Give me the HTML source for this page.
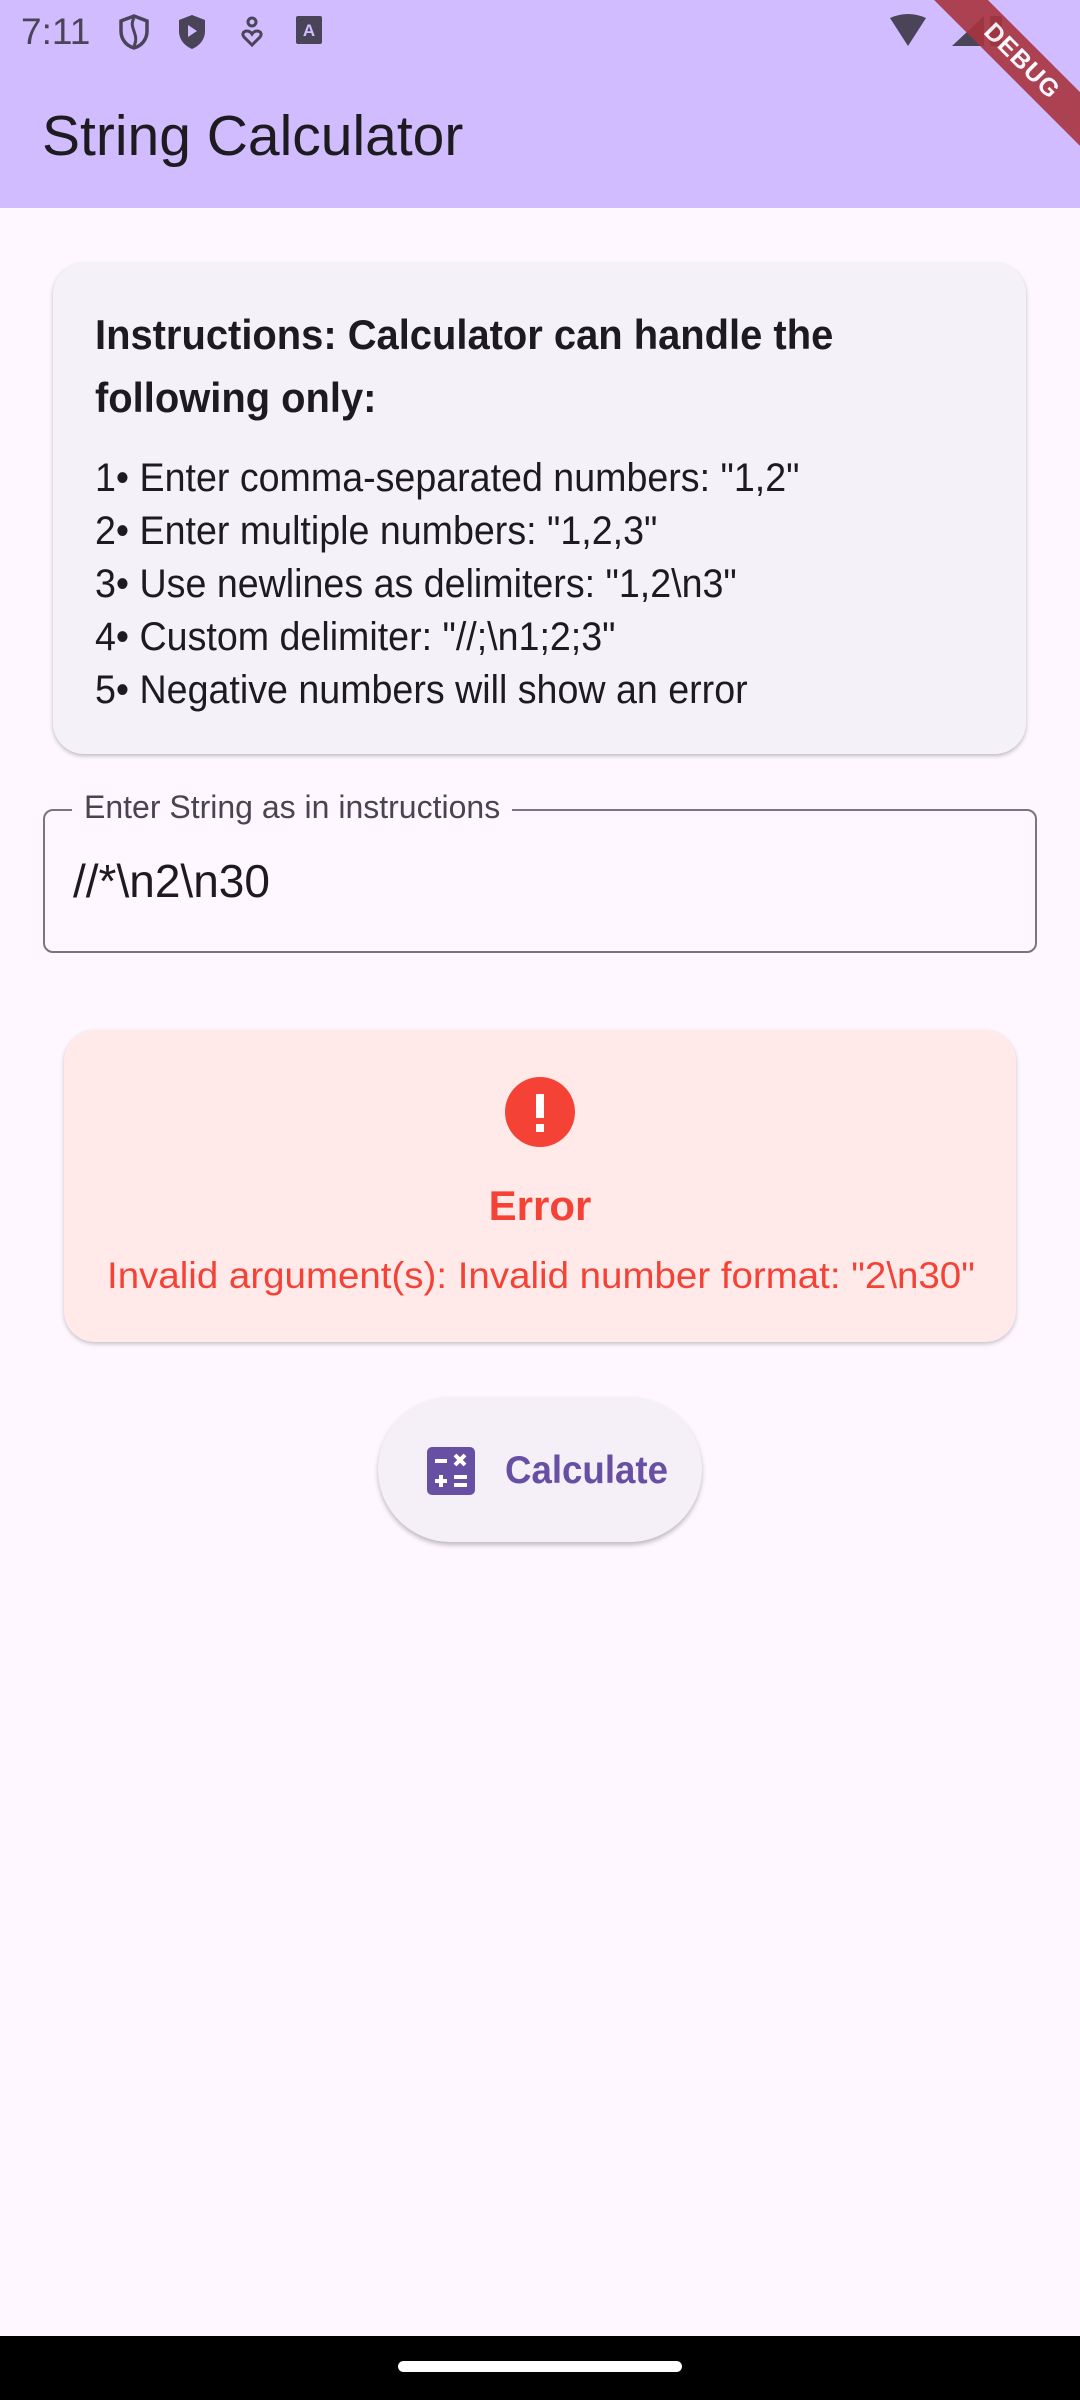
<!DOCTYPE html>
<html><head><meta charset="utf-8"><style>
*{margin:0;padding:0;box-sizing:border-box}
body{width:1080px;height:2400px;background:#fef7ff;font-family:"Liberation Sans",sans-serif;position:relative;overflow:hidden;color:#1d1b20}
.abs{position:absolute}
.sx{display:inline-block;transform-origin:left center;transform:scaleX(0.94);white-space:nowrap}
.appbar{left:0;top:0;width:1080px;height:208px;background:#d0bcff}
.card{left:53px;top:263px;width:973px;height:491px;background:#f5f1f8;border-radius:31px;box-shadow:0 2px 4px rgba(0,0,0,.25)}
.li{left:95px;font-size:40px;color:#1d1b20}
.field{left:43px;top:809px;width:994px;height:144px;border:2px solid #79747e;border-radius:10px}
.err{left:64px;top:1030px;width:952px;height:312px;background:#ffe9e9;border-radius:31px;box-shadow:0 2px 4px rgba(0,0,0,.22)}
.btn{left:378px;top:1397px;width:324px;height:145px;background:#f5eff7;border-radius:73px;box-shadow:0 3px 5px rgba(0,0,0,.25)}
</style></head><body>
<div class="abs appbar"></div>
<div class="abs" style="left:21px;top:11px;font-size:37px;color:#4a4458">7:11</div>
<svg class="abs" style="left:118px;top:14px" width="32" height="36" viewBox="0 0 32 36"><path d="M16 2 L29 7 V17 C29 26 23 32 16 34 C9 32 3 26 3 17 V7 Z" fill="none" stroke="#4a4458" stroke-width="3.5"/><path d="M16 4 C10 14 22 20 16 32" fill="none" stroke="#4a4458" stroke-width="3"/></svg>
<svg class="abs" style="left:176px;top:14px" width="32" height="36" viewBox="0 0 32 36"><path d="M16 1 L29 6 V17 C29 26 23 32 16 35 C9 32 3 26 3 17 V6 Z" fill="#4a4458"/><path d="M12 11 L21 17 L12 23Z" fill="#d0bcff"/></svg>
<svg class="abs" style="left:238px;top:16px" width="28" height="32" viewBox="0 0 28 32"><circle cx="14" cy="6" r="4" fill="none" stroke="#4a4458" stroke-width="3"/><path d="M14 29 L6 21 C2 16 10 12 14 18 C18 12 26 16 22 21Z" fill="none" stroke="#4a4458" stroke-width="3"/></svg>
<svg class="abs" style="left:294px;top:14px" width="30" height="32" viewBox="0 0 30 32"><rect x="2" y="2" width="26" height="28" rx="2" fill="#4a4458"/><text x="15" y="22" font-size="17" font-weight="bold" fill="#d0bcff" text-anchor="middle" font-family="Liberation Sans">A</text></svg>
<svg class="abs" style="left:888px;top:14px" width="120" height="34" viewBox="0 0 120 34"><path d="M2 4 Q20 -4 38 4 L20 32Z" fill="#4a4458"/><path d="M64 32 L96 2 V32Z" fill="#4a4458"/><rect x="102" y="2" width="12" height="30" rx="2" fill="#4a4458"/></svg>
<div class="abs" style="left:912px;top:42px;width:220px;height:38px;background:#a8343f;opacity:.9;transform:rotate(45deg);transform-origin:center;color:#fff;font-weight:bold;font-size:25px;text-align:center;line-height:38px;letter-spacing:1px">DEBUG</div>
<div class="abs" style="left:42px;top:103px;font-size:57px;color:#1d1b20">String Calculator</div>

<div class="abs card"></div>
<div class="abs" style="left:95px;top:303px;font-size:42px;font-weight:bold;line-height:63px"><span class="sx" style="transform:scaleX(0.95)">Instructions: Calculator can handle the</span><br><span class="sx" style="transform:scaleX(0.95)">following only:</span></div>
<div class="abs li" style="top:456px"><span class="sx">1• Enter comma-separated numbers: "1,2"</span></div>
<div class="abs li" style="top:509px"><span class="sx">2• Enter multiple numbers: "1,2,3"</span></div>
<div class="abs li" style="top:562px"><span class="sx">3• Use newlines as delimiters: "1,2\n3"</span></div>
<div class="abs li" style="top:615px"><span class="sx">4• Custom delimiter: "//;\n1;2;3"</span></div>
<div class="abs li" style="top:668px"><span class="sx">5• Negative numbers will show an error</span></div>

<div class="abs field"></div>
<div class="abs" style="left:72px;top:789px;padding:0 12px;background:#fef7ff;font-size:32px;color:#49454f">Enter String as in instructions</div>
<div class="abs" style="left:73px;top:854px;font-size:46px;color:#1d1b20">//*\n2\n30</div>

<div class="abs err"></div>
<svg class="abs" style="left:505px;top:1077px" width="70" height="70" viewBox="0 0 70 70"><circle cx="35" cy="35" r="35" fill="#f44336"/><rect x="31" y="17" width="8" height="24" fill="#fff"/><rect x="31" y="47" width="8" height="8" fill="#fff"/></svg>
<div class="abs" style="left:0;width:1080px;top:1182px;text-align:center;font-size:42px;font-weight:bold;color:#f44336">Error</div>
<div class="abs" style="left:107px;top:1255px;font-size:37px;color:#f44336"><span class="sx" style="transform:scaleX(1.04)">Invalid argument(s): Invalid number format: "2\n30"</span></div>

<div class="abs btn"></div>
<svg class="abs" style="left:427px;top:1447px" width="48" height="48" viewBox="0 0 48 48"><rect x="0" y="0" width="48" height="48" rx="5" fill="#6750a4"/><rect x="8" y="12" width="12" height="4" fill="#fff"/><path d="M28 8 L38 18 M38 8 L28 18" stroke="#fff" stroke-width="4"/><path d="M8 34 H20 M14 28 V40" stroke="#fff" stroke-width="4"/><rect x="27" y="28" width="13" height="4" fill="#fff"/><rect x="27" y="36" width="13" height="4" fill="#fff"/></svg>
<div class="abs" style="left:505px;top:1449px;font-size:39px;font-weight:bold;color:#6750a4"><span class="sx">Calculate</span></div>

<div class="abs" style="left:0;top:2336px;width:1080px;height:64px;background:#000"></div>
<div class="abs" style="left:398px;top:2361px;width:284px;height:11px;border-radius:6px;background:#fff"></div>
</body></html>
